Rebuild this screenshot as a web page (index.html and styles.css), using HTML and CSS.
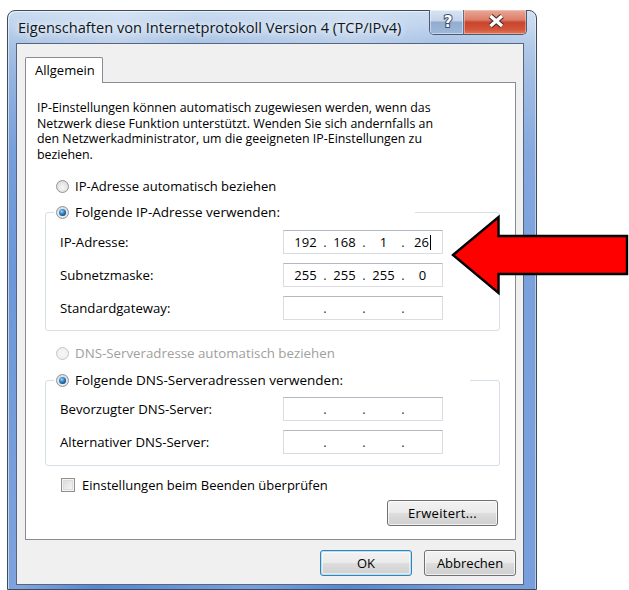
FILE: index.html
```html
<!DOCTYPE html>
<html lang="de">
<head>
<meta charset="utf-8">
<title>Eigenschaften von Internetprotokoll Version 4 (TCP/IPv4)</title>
<link rel="stylesheet" href="styles.css">
</head>
<body>
<div class="window">
  <div class="titlebar">
    <span class="title">Eigenschaften von Internetprotokoll Version 4 (TCP/IPv4)</span>
    <div class="caption-buttons">
      <span class="cbtn help">
        <svg width="35" height="25" viewBox="0 0 35 25"><text x="18" y="17" text-anchor="middle" class="help-glyph">?</text></svg>
      </span>
      <span class="cbtn close">
        <svg width="62" height="25" viewBox="0 0 62 25">
          <path d="M26.5 6 L38 16 M38 6 L26.5 16" stroke="#4a2a26" stroke-width="5.6" fill="none"/>
          <path d="M26.5 6 L38 16 M38 6 L26.5 16" stroke="#ffffff" stroke-width="3.4" fill="none"/>
        </svg>
      </span>
    </div>
  </div>

  <div class="client">
    <div class="tabs"><span class="tab">Allgemein</span></div>

    <div class="panel">
      <p class="intro">IP-Einstellungen können automatisch zugewiesen werden, wenn das<br>Netzwerk diese Funktion unterstützt. Wenden Sie sich andernfalls an<br>den Netzwerkadministrator, um die geeigneten IP-Einstellungen zu<br>beziehen.</p>

      <div class="option opt-auto-ip"><span class="radio"></span><span>IP-Adresse automatisch beziehen</span></div>

      <fieldset class="group group-ip">
        <legend class="option legend-ip"><span class="radio checked"></span><span>Folgende IP-Adresse verwenden:</span></legend>
        <div class="row first">
          <span class="lbl">IP-Adresse:</span>
          <div class="ipfield"><span class="oct">192</span><span class="dot">.</span><span class="oct">168</span><span class="dot">.</span><span class="oct">1</span><span class="dot">.</span><span class="oct">26<span class="caret"></span></span></div>
        </div>
        <div class="row">
          <span class="lbl">Subnetzmaske:</span>
          <div class="ipfield"><span class="oct">255</span><span class="dot">.</span><span class="oct">255</span><span class="dot">.</span><span class="oct">255</span><span class="dot">.</span><span class="oct">0</span></div>
        </div>
        <div class="row">
          <span class="lbl">Standardgateway:</span>
          <div class="ipfield"><span class="oct"></span><span class="dot">.</span><span class="oct"></span><span class="dot">.</span><span class="oct"></span><span class="dot">.</span><span class="oct"></span></div>
        </div>
      </fieldset>

      <div class="option opt-auto-dns disabled"><span class="radio"></span><span>DNS-Serveradresse automatisch beziehen</span></div>

      <fieldset class="group group-dns">
        <legend class="option legend-dns"><span class="radio checked"></span><span>Folgende DNS-Serveradressen verwenden:</span></legend>
        <div class="row first">
          <span class="lbl">Bevorzugter DNS-Server:</span>
          <div class="ipfield"><span class="oct"></span><span class="dot">.</span><span class="oct"></span><span class="dot">.</span><span class="oct"></span><span class="dot">.</span><span class="oct"></span></div>
        </div>
        <div class="row">
          <span class="lbl">Alternativer DNS-Server:</span>
          <div class="ipfield"><span class="oct"></span><span class="dot">.</span><span class="oct"></span><span class="dot">.</span><span class="oct"></span><span class="dot">.</span><span class="oct"></span></div>
        </div>
      </fieldset>

      <div class="option opt-check"><span class="checkbox"></span><span>Einstellungen beim Beenden überprüfen</span></div>

      <button class="btn btn-advanced" type="button">Erweitert...</button>
    </div>

    <div class="actions">
      <button class="btn btn-default" type="button">OK</button>
      <button class="btn" type="button">Abbrechen</button>
    </div>
  </div>
</div>

<svg class="pointer" width="629" height="590" viewBox="0 0 629 590">
  <polygon points="453,255 498.5,217 498.5,236 627,236 627,274 498.5,274 498.5,293" fill="#ff0000" stroke="#000" stroke-width="2.4" stroke-linejoin="miter"/>
</svg>
</body>
</html>
```

FILE: styles.css
```css
* { box-sizing: border-box; }

html, body { margin: 0; padding: 0; }

body {
  width: 629px;
  height: 590px;
  overflow: hidden;
  background: #fff;
  position: relative;
  font-family: "Open Sans", "Noto Sans", "DejaVu Sans", sans-serif;
  font-size: 13px;
  color: #000;
}

/* window frame (glass) */
.window {
  margin: 10px 0 0 7px;
  width: 530px;
  height: 580px;
  border: 1px solid #404a58;
  border-radius: 8px 8px 0 0;
  display: flex;
  flex-direction: column;
  background:
    linear-gradient(100deg, rgba(255,255,255,0) 0%, rgba(255,255,255,.25) 18%, rgba(255,255,255,0) 30%, rgba(255,255,255,.2) 55%, rgba(255,255,255,0) 70%, rgba(255,255,255,.2) 90%),
    linear-gradient(180deg, #c8dbf0 0px, #bed3ed 14px, #a7c1e4 34px, #8fb0de 70px, #6d98d8 140px, #5a8ad4 260px, #5687d2 100%);
  box-shadow: inset 1px 1px 0 rgba(255,255,255,.55), inset -1px 0 0 rgba(255,255,255,.45);
}

.titlebar {
  height: 32px;
  flex: none;
  display: flex;
  align-items: flex-start;
}

.title {
  padding-left: 10px;
  margin-top: 6px;
  font-size: 14.6px;
  line-height: 20px;
  color: #0e1620;
  text-shadow: 0 0 6px rgba(255,255,255,.95), 0 0 10px rgba(255,255,255,.7);
  white-space: nowrap;
}

.caption-buttons {
  margin-left: auto;
  margin-right: 9px;
  margin-top: -1px;
  display: flex;
  height: 25px;
  border: 1px solid #4b5a70;
  border-top: 0;
  border-radius: 0 0 5px 5px;
  overflow: hidden;
}

.cbtn { display: block; height: 24px; }
.cbtn svg { display: block; }

.help {
  width: 34px;
  border-right: 1px solid #5d6f8a;
  background: linear-gradient(180deg, #d8e4f2 0%, #c3d4ea 45%, #93adcf 50%, #9db8dc 100%);
  box-shadow: inset 0 0 0 1px rgba(255,255,255,.45);
}

.help-glyph {
  font-family: "DejaVu Sans", sans-serif;
  font-weight: bold;
  font-size: 15px;
  fill: #fff;
  stroke: #3e4f69;
  stroke-width: 2px;
  paint-order: stroke;
}

.close {
  width: 62px;
  background: linear-gradient(180deg, #e8a898 0%, #dd7f6a 40%, #c8452e 52%, #d2543a 80%, #e07a5a 100%);
  box-shadow: inset 0 0 0 1px rgba(255,220,210,.45);
}

/* client area */
.client {
  flex: 1;
  margin: 0 12px 4px 8px;
  border: 1px solid #56667e;
  background: #f0f0f0;
  padding: 13px 0 0 8px;
  display: flex;
  flex-direction: column;
}

.tabs {
  display: flex;
  height: 25px;
}

.tab {
  position: relative;
  z-index: 1;
  width: 78px;
  height: 26px;
  border: 1px solid #898c95;
  border-bottom: 0;
  border-radius: 2px 2px 0 0;
  background: #fff;
  padding: 4px 0 0 9px;
  line-height: 16px;
}

.panel {
  width: 491px;
  height: 458px;
  border: 1px solid #898c95;
  background: #fff;
  display: flex;
  flex-direction: column;
  align-items: flex-start;
}

.intro {
  margin: 17px 0 0 11px;
  font-size: 12.4px;
  line-height: 15.5px;
}

.option {
  display: flex;
  align-items: center;
  height: 16px;
  white-space: nowrap;
}

.option .radio { margin-right: 6px; }

.opt-auto-ip { margin: 16px 0 0 30px; }
.opt-auto-dns { margin: 14px 0 0 30px; font-size: 13.3px; }
.disabled { color: #a0a0a0; }

.radio {
  width: 13px;
  height: 13px;
  flex: none;
  border-radius: 50%;
  border: 1px solid #8f9295;
  background: radial-gradient(circle at 50% 60%, #f6f6f6 0%, #e2e2e2 60%, #cfcfcf 100%);
  display: flex;
  align-items: center;
  justify-content: center;
}

.disabled .radio {
  border-color: #c4c4c4;
  background: radial-gradient(circle, #f7f7f7 0%, #ececec 100%);
}

.radio.checked::after {
  content: "";
  width: 7px;
  height: 7px;
  border-radius: 50%;
  background: radial-gradient(circle at 40% 35%, #9fdcff 0%, #3c8ed0 35%, #14518e 70%, #0c3460 100%);
}

/* group boxes */
.group {
  margin: 10px 0 0 19px;
  width: 455px;
  padding: 0 0 10px 0;
  border: 1px solid #d5dfe5;
  border-radius: 3px;
  min-inline-size: 0;
}

.group-dns { margin-top: 11px; padding-bottom: 11px; }

.group legend {
  margin-left: 8px;
  padding: 0 2px;
  background: #fff;
  font-size: 13.5px;
}

.legend-ip { width: 361px; }
.legend-dns { width: 416px; }

.row {
  display: flex;
  align-items: center;
  height: 24px;
  margin-top: 9px;
  padding-left: 14px;
}

.group-ip .row.first { margin-top: 10px; }

.lbl { width: 223px; flex: none; font-size: 13.2px; }

.ipfield {
  width: 160px;
  height: 24px;
  border: 1px solid #dadce2;
  border-top-color: #b5b8c0;
  background: #fff;
  display: flex;
  align-items: center;
  padding-left: 5px;
  line-height: 16px;
}

.oct { width: 33px; text-align: center; white-space: nowrap; }
.dot { width: 6px; text-align: center; color: #333; }

.caret {
  display: inline-block;
  width: 1px;
  height: 15px;
  background: #000;
  vertical-align: -3px;
  margin-left: 1px;
}

/* checkbox */
.opt-check { margin: 11px 0 0 35px; height: 15px; }

.checkbox {
  width: 14px;
  height: 14px;
  flex: none;
  margin-right: 7px;
  border: 1px solid #8f8f8f;
  background: linear-gradient(135deg, #d6d6d6 0%, #ececec 60%, #f8f8f8 100%);
  box-shadow: inset 0 0 0 1px #f4f4f4, inset 0 0 0 2px #dcdcdc;
}

/* buttons */
.btn {
  font: inherit;
  color: #000;
  height: 26px;
  border: 1px solid #707070;
  border-radius: 3px;
  background: linear-gradient(180deg, #f2f2f2 0%, #ebebeb 48%, #dddddd 52%, #cfcfcf 100%);
  box-shadow: inset 0 0 0 1px rgba(255,255,255,.7);
  padding: 0;
  width: 92px;
}

.btn-advanced {
  width: 111px;
  margin: 8px 0 0 361px;
  letter-spacing: 0.3px;
}

.btn-default {
  border-color: #3c7fb1;
  box-shadow: inset 0 0 0 1px #aee3f8, inset 0 0 0 2px rgba(255,255,255,.5);
}

.actions {
  display: flex;
  justify-content: flex-end;
  gap: 12px;
  margin-top: 10px;
  padding-right: 7px;
}

/* red pointer drawn over the dialog */
.pointer {
  position: absolute;
  left: 0;
  top: 0;
  pointer-events: none;
}
```
